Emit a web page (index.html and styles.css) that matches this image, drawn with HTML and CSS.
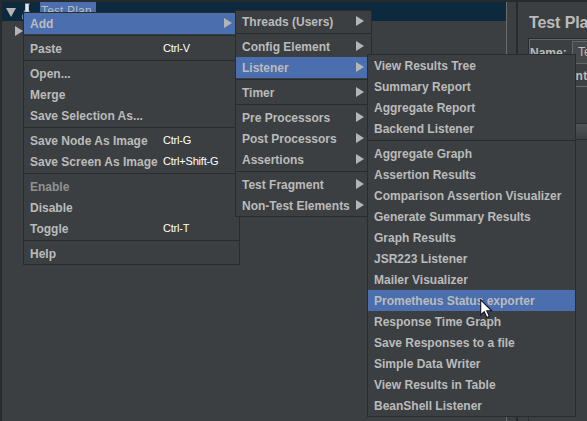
FILE: index.html
```html
<!DOCTYPE html>
<html lang="en">
<head>
<meta charset="utf-8">
<title>Test Plan</title>
<link rel="stylesheet" href="styles.css">
</head>
<body>
<div class="app">
  <aside class="tree">
    <div class="node root">
      <svg class="open" width="10" height="9" viewBox="0 0 10 9"><path d="M0 0H10L5 9Z" fill="#b5b5b5"/></svg>
      <svg class="flask" width="12" height="18" viewBox="0 0 12 18"><path d="M4 1.500H9L8 3V8L11 17H1L4 8Z" fill="#b9bec4"/><path d="M6 2V9" stroke="#f4f4f4" stroke-width="1.500"/><path d="M4 8L1 15" stroke="#7292b5"/></svg>
      <span class="label">Test Plan</span>
    </div>
    <svg class="closed" width="8" height="10" viewBox="0 0 8 10"><path d="M0 0L8 5L0 10Z" fill="#b5b5b5"/></svg>
  </aside>
  <div class="splitter"></div>
  <main class="panel">
    <h1>Test Plan</h1>
    <div class="form">
      <div class="row"><label>Name:</label><span class="field">Test Plan</span></div>
      <div class="row comments"><label>Comments:</label></div>
    </div>
    <div class="tablehead"></div>
    <div class="tablebody"></div>
  </main>
</div>

<nav class="menu main-menu">
  <div class="item active"><span>Add</span><i class="arrow"></i></div>
  <hr>
  <div class="item"><span>Paste</span><kbd>Ctrl-V</kbd></div>
  <hr>
  <div class="item"><span>Open...</span></div>
  <div class="item"><span>Merge</span></div>
  <div class="item"><span>Save Selection As...</span></div>
  <hr>
  <div class="item"><span>Save Node As Image</span><kbd>Ctrl-G</kbd></div>
  <div class="item"><span>Save Screen As Image</span><kbd>Ctrl+Shift-G</kbd></div>
  <hr>
  <div class="item disabled"><span>Enable</span></div>
  <div class="item"><span>Disable</span></div>
  <div class="item"><span>Toggle</span><kbd>Ctrl-T</kbd></div>
  <hr>
  <div class="item"><span>Help</span></div>
</nav>

<nav class="menu add-menu">
  <div class="item"><span>Threads (Users)</span><i class="arrow"></i></div>
  <hr>
  <div class="item"><span>Config Element</span><i class="arrow"></i></div>
  <div class="item active"><span>Listener</span><i class="arrow"></i></div>
  <hr>
  <div class="item"><span>Timer</span><i class="arrow"></i></div>
  <hr>
  <div class="item"><span>Pre Processors</span><i class="arrow"></i></div>
  <div class="item"><span>Post Processors</span><i class="arrow"></i></div>
  <div class="item"><span>Assertions</span><i class="arrow"></i></div>
  <hr>
  <div class="item"><span>Test Fragment</span><i class="arrow"></i></div>
  <div class="item"><span>Non-Test Elements</span><i class="arrow"></i></div>
</nav>

<nav class="menu listener-menu">
  <div class="item"><span>View Results Tree</span></div>
  <div class="item"><span>Summary Report</span></div>
  <div class="item"><span>Aggregate Report</span></div>
  <div class="item"><span>Backend Listener</span></div>
  <hr>
  <div class="item"><span>Aggregate Graph</span></div>
  <div class="item"><span>Assertion Results</span></div>
  <div class="item"><span>Comparison Assertion Visualizer</span></div>
  <div class="item"><span>Generate Summary Results</span></div>
  <div class="item"><span>Graph Results</span></div>
  <div class="item"><span>JSR223 Listener</span></div>
  <div class="item"><span>Mailer Visualizer</span></div>
  <div class="item active"><span>Prometheus Status exporter</span></div>
  <div class="item"><span>Response Time Graph</span></div>
  <div class="item"><span>Save Responses to a file</span></div>
  <div class="item"><span>Simple Data Writer</span></div>
  <div class="item"><span>View Results in Table</span></div>
  <div class="item"><span>BeanShell Listener</span></div>
</nav>

<svg class="cursor" width="13" height="20" viewBox="0 0 13 20"><path d="M.7 .8V16L4.200 12.700L6.800 18.500L9.300 17.300L6.800 11.800H11.700Z" fill="#fff" stroke="#10132a" stroke-width="1.100"/></svg>
</body>
</html>
```
FILE: styles.css
```css
* { box-sizing: border-box; }
body {
  margin: 0;
  width: 587px;
  height: 421px;
  overflow: hidden;
  background: #3c3f41;
  color: #bbb;
  font: bold 12px/21px "Liberation Sans", Arial, sans-serif;
}
.app {
  display: flex;
  height: 421px;
  overflow: hidden;
  border-top: 2px solid #282b2d;
  border-left: 2px solid #282b2d;
}
.tree { width: 504px; flex: none; }
.node {
  display: flex;
  height: 19px;
  background: #0d293e;
}
.open { margin: 6px 0 0 4px; flex: none; }
.flask { margin: 0 0 0 5px; flex: none; }
.label {
  margin-left: 7px;
  width: 56px;
  padding-left: 1px;
  height: 19px;
  line-height: 19px;
  font-weight: normal;
  letter-spacing: .15px;
  background: #4b6eaf;
}
.closed { display: block; margin: 5px 0 0 13px; }
.splitter {
  width: 12px;
  flex: none;
  border-left: 1px solid #6b6e70;
  border-right: 2px solid #282b2d;
}
.panel {
  flex: 1;
  min-width: 0;
  display: flex;
  flex-direction: column;
  overflow: hidden;
  white-space: nowrap;
}
h1 {
  margin: 9px 0 0 11px;
  font-size: 16px;
  line-height: 24px;
  letter-spacing: -.1px;
}
.form {
  margin: 3px 0 0 10px;
  height: 49px;
  border: 1px solid #292b2d;
  border-right: 0;
  border-bottom-color: #696c6e;
  box-shadow: inset 1px 1px #626567;
}
.row { display: flex; height: 26px; padding: 2px 0 0 1px; }
.row label { width: 42px; flex: none; line-height: 24px; }
.field {
  height: 23px;
  flex: 1;
  min-width: 0;
  overflow: hidden;
  padding-left: 5px;
  border: 1px solid #646769;
  border-right: 0;
  background: #45494a;
  line-height: 21px;
  font-weight: normal;
}
.comments { padding-top: 0; }
.comments label { width: auto; line-height: 23px; letter-spacing: .3px; }
.tablehead {
  height: 17px;
  margin: 36px 0 0 10px;
  border: 1px solid #2b2d2f;
  border-right: 0;
  background: linear-gradient(#525557, #3d4042);
}
.tablebody {
  flex: 1;
  margin-left: 10px;
  border-left: 1px solid #2b2d2f;
}
.menu {
  position: absolute;
  border: 1px solid #292b2d;
  background: #3c3f41;
  white-space: nowrap;
}
.main-menu { left: 23px; top: 12px; width: 217px; }
.add-menu { left: 235px; top: 10px; width: 137px; }
.listener-menu { left: 367px; top: 54px; width: 209px; }
.item {
  display: flex;
  height: 21px;
  padding-left: 6px;
}
.item span { line-height: 23px; }
.item.active { background: #4b6eaf; }
.item.disabled { color: #929292; }
.main-menu .item span { width: 133px; }
.add-menu .item span { width: 114px; }
.arrow {
  width: 8px;
  height: 10px;
  margin-top: 5px;
  background: #b5b5b5;
  clip-path: polygon(0 0, 100% 50%, 0 100%);
}
.main-menu .arrow { margin-left: 61px; }
kbd {
  font: 11px/21px "Liberation Sans", Arial, sans-serif;
  letter-spacing: -.2px;
  color: #fff;
}
hr {
  height: 1px;
  margin: 1px 0 2px;
  border: 0;
  background: #292b2d;
}
.cursor { position: absolute; left: 480px; top: 299px; }
```
